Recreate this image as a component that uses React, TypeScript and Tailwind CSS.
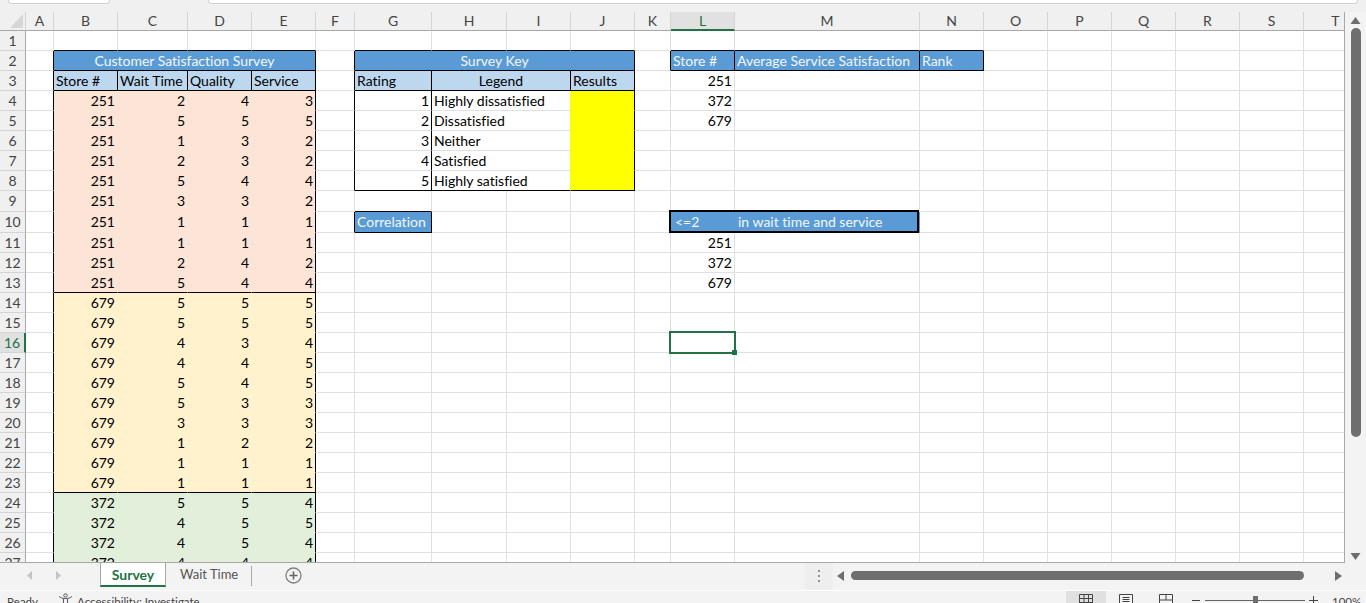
import React from "react";

const colLabels = ["A","B","C","D","E","F","G","H","I","J","K","L","M","N","O","P","Q","R","S","T"];

type Fill = { bg: string; r: string; b: string };
const BLUE: Fill = { bg: "bg-[#5b9bd5]", r: "border-r-[#5b9bd5]", b: "border-b-[#5b9bd5]" };
const LIGHT: Fill = { bg: "bg-[#bdd7ee]", r: "border-r-[#bdd7ee]", b: "border-b-[#bdd7ee]" };
const PEACH: Fill = { bg: "bg-[#fce4d6]", r: "border-r-[#fce4d6]", b: "border-b-[#fce4d6]" };
const CREAM: Fill = { bg: "bg-[#fff2cc]", r: "border-r-[#fff2cc]", b: "border-b-[#fff2cc]" };
const GREEN: Fill = { bg: "bg-[#e2efda]", r: "border-r-[#e2efda]", b: "border-b-[#e2efda]" };
const YELLOW: Fill = { bg: "bg-[#ffff00]", r: "border-r-[#ffff00]", b: "border-b-[#ffff00]" };
const NONE: Fill = { bg: "bg-white", r: "border-r-[#e0e0e0]", b: "border-b-[#e0e0e0]" };

const survey: number[][] = [
  [251,2,4,3],[251,5,5,5],[251,1,3,2],[251,2,3,2],[251,5,4,4],[251,3,3,2],[251,1,1,1],[251,1,1,1],[251,2,4,2],[251,5,4,4],
  [679,5,5,5],[679,5,5,5],[679,4,3,4],[679,4,4,5],[679,5,4,5],[679,5,3,3],[679,3,3,3],[679,1,2,2],[679,1,1,1],[679,1,1,1],
  [372,5,5,4],[372,4,5,5],[372,4,5,4],[372,4,4,4],
];
const legend = ["Highly dissatisfied","Dissatisfied","Neither","Satisfied","Highly satisfied"];

function fillOf(r: number, c: number): Fill {
  if (c >= 2 && c <= 5 && r >= 2) {
    if (r === 2) return BLUE;
    if (r === 3) return LIGHT;
    if (r <= 13) return PEACH;
    if (r <= 23) return CREAM;
    return GREEN;
  }
  if (c >= 7 && c <= 10 && r === 2) return BLUE;
  if (c >= 7 && c <= 10 && r === 3) return LIGHT;
  if (c === 10 && r >= 4 && r <= 8) return YELLOW;
  if (c === 7 && r === 10) return BLUE;
  if (c >= 12 && c <= 14 && r === 2) return BLUE;
  if ((c === 12 || c === 13) && r === 10) return BLUE;
  return NONE;
}

function rightBlack(r: number, c: number): boolean {
  if (c === 1 && r >= 2) return true;
  if (r === 3 && c >= 2 && c <= 4) return true;
  if (c === 5 && r >= 2) return true;
  if (c === 6 && r >= 2 && r <= 8) return true;
  if (c === 7 && r >= 3 && r <= 8) return true;
  if (c === 8 && r === 3) return true;
  if (c === 9 && r === 3) return true;
  if (c === 10 && r >= 2 && r <= 8) return true;
  if (c === 6 && r === 10) return true;
  if (c === 7 && r === 10) return true;
  if (c === 11 && r === 2) return true;
  if (r === 2 && c >= 12 && c <= 14) return true;
  return false;
}

function bottomBlack(r: number, c: number): boolean {
  if (c >= 2 && c <= 5 && [1, 2, 3, 13, 23].includes(r)) return true;
  if (c >= 7 && c <= 10 && [1, 2, 3, 8].includes(r)) return true;
  if (c === 7 && (r === 9 || r === 10)) return true;
  if (c >= 12 && c <= 14 && (r === 1 || r === 2)) return true;
  return false;
}

function content(r: number, c: number): { text?: string | number; kind?: "num" | "text" | "center" } {
  if (r >= 4 && c >= 2 && c <= 5) return { text: survey[r - 4][c - 2], kind: "num" };
  if (r === 2 && c === 2) return { text: "Customer Satisfaction Survey", kind: "center" };
  if (r === 3 && c >= 2 && c <= 5) return { text: ["Store #", "Wait Time", "Quality", "Service"][c - 2], kind: "text" };
  if (r === 2 && c === 7) return { text: "Survey Key", kind: "center" };
  if (r === 3 && c === 7) return { text: "Rating", kind: "text" };
  if (r === 3 && c === 8) return { text: "Legend", kind: "center" };
  if (r === 3 && c === 10) return { text: "Results", kind: "text" };
  if (r >= 4 && r <= 8 && c === 7) return { text: r - 3, kind: "num" };
  if (r >= 4 && r <= 8 && c === 8) return { text: legend[r - 4], kind: "text" };
  if (r === 10 && c === 7) return { text: "Correlation", kind: "text" };
  if (r === 2 && c === 12) return { text: "Store #", kind: "text" };
  if (r === 2 && c === 13) return { text: "Average Service Satisfaction", kind: "text" };
  if (r === 2 && c === 14) return { text: "Rank", kind: "text" };
  if (r >= 3 && r <= 5 && c === 12) return { text: [251, 372, 679][r - 3], kind: "num" };
  if (r >= 11 && r <= 13 && c === 12) return { text: [251, 372, 679][r - 11], kind: "num" };
  return {};
}

function Cell({ r, c }: { r: number; c: number }) {
  const f = fillOf(r, c);
  const endC = r === 2 && (c === 2 || c === 7) ? c + 3 : (c === 8 && r >= 3 && r <= 8) || (c === 12 && r === 10) ? c + 1 : c;
  const span = endC - c + 1;
  const spanClass = span === 4 ? "col-span-4" : span === 2 ? "col-span-2" : "";
  const rightCls = rightBlack(r, endC) ? "border-r-black" : c === 8 && r >= 4 && r <= 8 ? "border-r-[#ffff00]" : f.r;
  const bottomCls = bottomBlack(r, c) ? "border-b-black" : f.b;
  const { text, kind } = content(r, c);
  const dark = f === BLUE ? "text-[#f2f7fc]" : "text-black";
  const justify = kind === "num" ? "justify-end pr-[2px]" : kind === "center" ? "justify-center" : "pl-[2px]";
  const selected = r === 16 && c === 12;
  const thick = r === 10 && c === 12;
  const nudge = r === 9 || r === 10 ? "" : "pt-px";
  return (
    <div className={`relative flex items-center whitespace-nowrap border-r border-b text-[14px] leading-none ${nudge} ${spanClass} ${f.bg} ${rightCls} ${bottomCls} ${dark} ${justify} ${selected || thick ? "z-10" : ""}`}>
      {thick ? (
        <>
          <span className="w-[64px] pl-[2px]">{"<=2"}</span>
          <span className="pl-[1px]">in wait time and service</span>
          <div className="absolute -left-[2px] right-0 -top-[2px] -bottom-[1px] border-2 border-black" />
        </>
      ) : (
        text
      )}
      {selected && (
        <div className="absolute -left-[2px] -right-[2px] -top-[2px] -bottom-[2px] border-2 border-[#217346]">
          <div className="absolute -right-[3px] -bottom-[3px] w-[5px] h-[5px] bg-[#217346]" />
        </div>
      )}
    </div>
  );
}

function covered(r: number, c: number) {
  if (r === 2 && ((c >= 3 && c <= 5) || (c >= 8 && c <= 10))) return true;
  if (r >= 3 && r <= 8 && c === 9) return true;
  if (r === 10 && c === 13) return true;
  return false;
}

function Tri({ dir, cls }: { dir: "l" | "r" | "u" | "d"; cls: string }) {
  const pts = { l: "8,0 8,10 1,5", r: "1,0 1,10 8,5", u: "0,8 10,8 5,1", d: "0,1 10,1 5,8" }[dir];
  return (
    <svg width={dir === "l" || dir === "r" ? 9 : 11} height={dir === "l" || dir === "r" ? 10 : 9} viewBox={dir === "l" || dir === "r" ? "0 0 9 10" : "0 0 10 9"} className={cls}>
      <polygon points={pts} fill="currentColor" />
    </svg>
  );
}

function SmallTri({ points }: { points: string }) {
  return (
    <svg width="5" height="9" viewBox="0 0 5 9">
      <polygon points={points} fill="currentColor" />
    </svg>
  );
}

export default function App() {
  const rows = Array.from({ length: 27 }, (_, i) => i + 1);
  return (
    <div className="flex flex-col w-[1366px] h-[603px] overflow-hidden bg-[#f0f0f0] font-['Lato',sans-serif] text-[#444] [font-variant-ligatures:none]">
      {/* formula bar remnants */}
      <div className="flex h-[12px] shrink-0 items-start pl-[8px]">
        <div className="w-[102px] h-[4px] bg-white border border-t-0 border-[#d0d0d0] rounded-b-[5px]" />
        <div className="ml-[98px] w-[1150px] h-[4px] bg-white border border-t-0 border-[#d0d0d0] rounded-b-[5px]" />
      </div>

      {/* sheet + vertical scrollbar */}
      <div className="flex h-[551px] shrink-0">
        <div className="w-[1345px] border-r border-b border-[#a8a8a8] overflow-hidden">
          <div className="grid grid-cols-[26px_28px_64px_70px_64px_64px_39px_77px_75px_64px_64px_36px_64px_185px_64px_64px_64px_64px_64px_64px_64px] grid-rows-[19px_20px_20px_20px_20px_20px_20px_20px_20px_21px_21px_20px_20px_20px_20px_20px_20px_20px_20px_20px_20px_20px_20px_20px_20px_20px_20px_20px]">
            {/* corner */}
            <div className="relative border-r border-b border-r-[#d4d4d4] border-b-[#a8a8a8] bg-[#f0f0f0]">
              <svg width="13" height="14" viewBox="0 0 13 14" className="absolute left-[10px] top-[2px]">
                <polygon points="13,0 13,14 0,14" fill="#d6d6d6" />
              </svg>
            </div>
            {colLabels.map((l) => (
              <div
                key={l}
                className={
                  l === "L"
                    ? "flex items-center justify-center border-r border-r-[#d4d4d4] border-b-2 border-b-[#217346] bg-[#e1e1e1] text-[#217346] text-[14px] leading-none"
                    : "flex items-center justify-center border-r border-b border-r-[#d4d4d4] border-b-[#a8a8a8] bg-[#f0f0f0] text-[#444] text-[14px] leading-none"
                }
              >
                {l}
              </div>
            ))}
            {rows.map((r) => (
              <React.Fragment key={r}>
                <div
                  className={
                    r === 16
                      ? "flex items-center justify-center border-r-2 border-b border-r-[#217346] border-b-[#d4d4d4] bg-[#e1e1e1] text-[#217346] text-[14px] leading-none"
                      : "flex items-center justify-center border-r border-b border-r-[#a8a8a8] border-b-[#d4d4d4] bg-[#f0f0f0] text-[#444] text-[14px] leading-none"
                  }
                >
                  {r}
                </div>
                {colLabels.map((_, i) => (covered(r, i + 1) ? null : <Cell key={i} r={r} c={i + 1} />))}
              </React.Fragment>
            ))}
          </div>
        </div>
        {/* vertical scrollbar */}
        <div className="flex flex-col items-center w-[21px] bg-[#f3f3f3] pt-[4px]">
          <Tri dir="u" cls="text-[#6e6e6e]" />
          <div className="mt-[3px] w-[10px] h-[409px] rounded-[5px] bg-[#6e6e6e]" />
          <div className="mt-auto mb-[2px]">
            <Tri dir="d" cls="text-[#6e6e6e]" />
          </div>
        </div>
      </div>

      {/* tab bar */}
      <div className="flex items-stretch h-[27px] shrink-0 bg-[#f3f3f3] border-b border-white box-content">
        <div className="flex items-center h-[24px] w-[100px] pl-[27px] gap-[24px] text-[#c4c4c4]">
          <SmallTri points="5,0 5,9 0,4.500" />
          <SmallTri points="0,0 0,9 5,4.500" />
        </div>
        <div className="flex items-center justify-center w-[66px] h-[24px] bg-white border-x border-[#a8a8a8] border-b-2 border-b-[#217346] text-[14px] font-bold text-[#217346]">
          Survey
        </div>
        <div className="flex items-center h-[24px] w-[85px] pl-[14px] text-[13px] text-[#555]">Wait Time</div>
        <div className="mt-[3px] h-[20px] w-px bg-[#a8a8a8]" />
        <div className="flex items-center ml-[33px] h-[24px]">
          <svg width="17" height="17" viewBox="0 0 17 17">
            <circle cx="8.500" cy="8.500" r="7.500" fill="none" stroke="#808080" strokeWidth="1.3" />
            <path d="M8.500 4.500v8M4.500 8.500h8" stroke="#666" strokeWidth="1.6" />
          </svg>
        </div>
        <div className="flex items-center justify-center ml-[503px] w-[28px] bg-[#eeeeee] h-[26px]">
          <div className="flex flex-col gap-[3px]">
            <div className="w-[2px] h-[2px] bg-[#909090]" />
            <div className="w-[2px] h-[2px] bg-[#909090]" />
            <div className="w-[2px] h-[2px] bg-[#909090]" />
          </div>
        </div>
        <div className="flex items-center w-[512px] pl-[3px] pb-[2px]">
          <Tri dir="l" cls="text-[#6e6e6e]" />
          <div className="ml-[6px] w-[453px] h-[9px] rounded-[5px] bg-[#6e6e6e]" />
          <div className="ml-[30px]">
            <Tri dir="r" cls="text-[#6e6e6e]" />
          </div>
        </div>
      </div>

      {/* status bar */}
      <div className="flex flex-1 bg-[#f3f3f3] text-[#444] text-[11.5px] leading-none">
        <span className="pl-[7px] pt-[5px] w-[58px]">Ready</span>
        <svg width="15" height="14" viewBox="0 0 15 14" className="mt-[2px]" fill="none" stroke="#555" strokeWidth="1">
          <circle cx="7.500" cy="2.500" r="1.700" />
          <path d="M1 3.500c2 1.500 3.500 2 6.500 2s4.500-.5 6.500-2M5.500 6v3l-2 4M9.500 6v3l2 4" />
        </svg>
        <span className="pl-[4px] pt-[5px]">Accessibility: Investigate</span>
        <div className="ml-auto flex">
          <div className="flex justify-center w-[40px] bg-[#e0e0e0] pt-[3px]">
            <svg width="14" height="10" viewBox="0 0 14 10" fill="none" stroke="#444"><path d="M.5 10V.5h13V10M.5 4.500h13M.5 8.500h13M5 .5V10M9.500 .5V10" /></svg>
          </div>
          <div className="flex justify-center w-[40px] pt-[3px]">
            <svg width="14" height="10" viewBox="0 0 14 10" fill="none" stroke="#444"><path d="M.5 10V.5h13V10M3.500 3.500h7M3.500 5.500h7M3.500 7.500h7" /></svg>
          </div>
          <div className="flex justify-center w-[40px] pt-[3px]">
            <svg width="14" height="10" viewBox="0 0 14 10" fill="none" stroke="#444"><path d="M.5 10V.5h13V10M7 .5V6M.5 6H13.500" /></svg>
          </div>
          <div className="flex items-start w-[134px] pl-[6px] pt-[8px]">
            <div className="w-[8px] h-[1px] bg-[#444] mt-[1px]" />
            <div className="relative ml-[5px] w-[100px] h-[1px] bg-[#666] mt-[1px]">
              <div className="absolute left-[48px] -top-[4px] w-[5px] h-[9px] bg-[#6e6e6e]" />
            </div>
            <div className="relative ml-[4px] w-[9px] h-[1px] bg-[#444] mt-[1px]">
              <div className="absolute left-[4px] -top-[4px] w-[1px] h-[9px] bg-[#444]" />
            </div>
          </div>
          <span className="w-[46px] pl-[12px] pt-[5px]">100%</span>
        </div>
      </div>
    </div>
  );
}
